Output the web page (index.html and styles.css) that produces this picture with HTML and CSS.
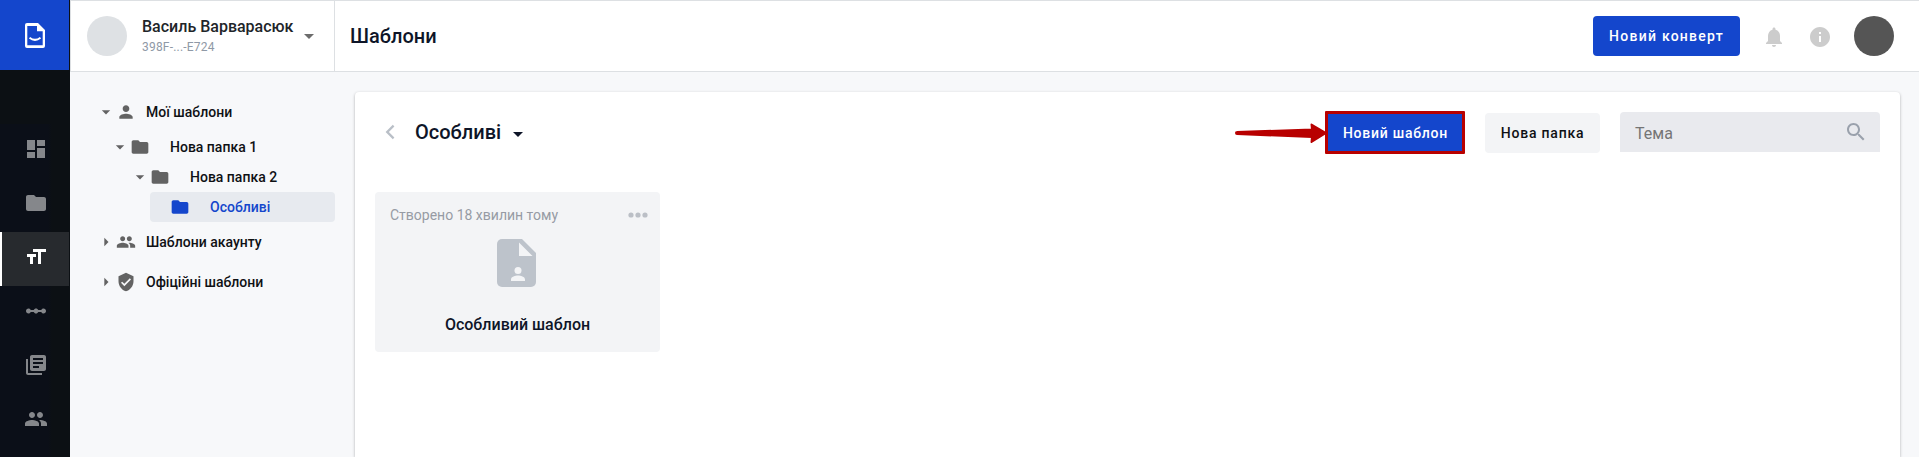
FILE: index.html
```html
<!DOCTYPE html>
<html lang="uk">
<head>
<meta charset="utf-8">
<title>Шаблони</title>
<link rel="stylesheet" href="styles.css">
</head>
<body>
<svg class="defs" width="0" height="0">
  <symbol id="folder" viewBox="0 0 24 24"><path d="M10 4H4c-1.1 0-2 .9-2 2v12c0 1.100.9 2 2 2h16c1.100 0 2-.9 2-2V8c0-1.100-.9-2-2-2h-8z"/></symbol>
  <symbol id="people" viewBox="0 0 24 24"><path d="M16 11c1.660 0 2.990-1.340 2.990-3S17.660 5 16 5s-3 1.340-3 3 1.340 3 3 3zm-8 0c1.660 0 2.990-1.340 2.990-3S9.660 5 8 5 5 6.340 5 8s1.340 3 3 3zm0 2c-2.330 0-7 1.170-7 3.500V19h14v-2.500c0-2.330-4.670-3.500-7-3.500zm8 0c-.29 0-.62.02-.97.05 1.160.84 1.970 1.970 1.970 3.450V19h6v-2.500c0-2.330-4.670-3.500-7-3.500z"/></symbol>
  <symbol id="down" viewBox="0 0 24 24"><path d="M7 10l5 5 5-5z"/></symbol>
  <symbol id="right" viewBox="0 0 24 24"><path d="M10 17l5-5-5-5z"/></symbol>
</svg>
<div class="app">
  <nav class="rail">
    <a class="logo"><svg width="20" height="25" viewBox="0 0 20 25"><path fill="#fff" fill-rule="evenodd" d="M2 0h11l7 7v16a2 2 0 0 1-2 2H2a2 2 0 0 1-2-2V2a2 2 0 0 1 2-2zm.3 3v19.200h15.400V8.300H12V3z"/><path d="M4.500 14.800q5.500 4.200 11 0" fill="none" stroke="#fff" stroke-width="2"/></svg></a>
    <a class="rail-item"><svg class="icon" viewBox="0 0 24 24"><path d="M3 13h8V3H3v10zm0 8h8v-6H3v6zm10 0h8V11h-8v10zm0-18v6h8V3h-8z"/></svg></a>
    <a class="rail-item"><svg class="icon"><use href="#folder"/></svg></a>
    <a class="rail-item active"><svg class="icon" viewBox="0 0 24 24"><path d="M9 4v3h5v12h3V7h5V4H9zm-6 8h3v7h3v-7h3V9H3v3z"/></svg></a>
    <a class="rail-item"><svg class="icon" viewBox="0 0 24 24"><path d="M19.500 9.500c-1.030 0-1.900.62-2.290 1.500h-2.920c-.39-.88-1.260-1.500-2.290-1.500s-1.900.62-2.290 1.500H6.790c-.39-.88-1.260-1.500-2.290-1.500C3.120 9.500 2 10.620 2 12s1.120 2.500 2.500 2.500c1.030 0 1.900-.62 2.290-1.500h2.920c.39.880 1.260 1.500 2.290 1.500s1.900-.62 2.290-1.500h2.920c.39.880 1.260 1.500 2.290 1.500 1.380 0 2.500-1.120 2.500-2.500s-1.120-2.500-2.500-2.500z"/></svg></a>
    <a class="rail-item"><svg class="icon" viewBox="0 0 24 24"><path d="M4 6H2v14c0 1.100.9 2 2 2h14v-2H4V6zm16-4H8c-1.100 0-2 .9-2 2v12c0 1.100.9 2 2 2h12c1.100 0 2-.9 2-2V4c0-1.100-.9-2-2-2zm-1 9H9V9h10v2zm-4 4H9v-2h6v2zm4-8H9V5h10v2z"/></svg></a>
    <a class="rail-item"><svg class="icon"><use href="#people"/></svg></a>
  </nav>
  <div class="main">
    <header class="topbar">
      <div class="account">
        <span class="account-avatar"></span>
        <div class="account-text"><div class="account-name">Василь Варварасюк</div><div class="account-id">398F-...-E724</div></div>
        <svg class="icon account-caret"><use href="#down"/></svg>
      </div>
      <h1 class="page-title">Шаблони</h1>
      <div class="topbar-actions">
        <button class="btn primary envelope">Новий конверт</button>
        <svg class="icon bell" viewBox="0 0 24 24"><path d="M12 22c1.100 0 2-.9 2-2h-4c0 1.100.89 2 2 2zm6-6v-5c0-3.070-1.640-5.640-4.500-6.320V4c0-.83-.67-1.500-1.500-1.500s-1.500.67-1.500 1.500v.68C7.630 5.360 6 7.920 6 11v5l-2 2v1h16v-1l-2-2z"/></svg>
        <svg class="icon info" viewBox="0 0 24 24"><path d="M12 2C6.480 2 2 6.480 2 12s4.480 10 10 10 10-4.480 10-10S17.520 2 12 2zm1 15h-2v-6h2v6zm0-8h-2V7h2v2z"/></svg>
        <span class="user-avatar"></span>
      </div>
    </header>
    <div class="content">
      <aside class="tree">
        <div class="row root"><svg class="small"><use href="#down"/></svg><svg class="small" viewBox="0 0 24 24"><path d="M12 12c2.210 0 4-1.790 4-4s-1.790-4-4-4-4 1.790-4 4 1.790 4 4 4zm0 2c-2.670 0-8 1.340-8 4v2h16v-2c0-2.660-5.330-4-8-4z"/></svg><span class="label">Мої шаблони</span></div>
        <div class="row level-1"><svg class="small"><use href="#down"/></svg><svg class="small"><use href="#folder"/></svg><span class="label">Нова папка 1</span></div>
        <div class="row level-2"><svg class="small"><use href="#down"/></svg><svg class="small"><use href="#folder"/></svg><span class="label">Нова папка 2</span></div>
        <div class="row level-3 selected"><svg class="small"><use href="#folder"/></svg><span class="label">Особливі</span></div>
        <div class="row root"><svg class="small"><use href="#right"/></svg><svg class="small" viewBox="0 0 24 24"><use href="#people"/></svg><span class="label">Шаблони акаунту</span></div>
        <div class="row root"><svg class="small"><use href="#right"/></svg><svg class="small" viewBox="0 0 24 24"><path d="M12 1L3 5v6c0 5.550 3.840 10.740 9 12 5.160-1.260 9-6.450 9-12V5l-9-4zm-2 16l-4-4 1.410-1.410L10 14.170l6.590-6.590L18 9l-8 8z"/></svg><span class="label">Офіційні шаблони</span></div>
      </aside>
      <section class="panel">
        <div class="toolbar">
          <svg class="icon back" viewBox="0 0 24 24"><path d="M15.400 6.400L13.800 4.800 6.600 12l7.200 7.200 1.600-1.600L9.900 12z"/></svg>
          <h2 class="folder-title">Особливі</h2>
          <svg class="icon title-caret"><use href="#down"/></svg>
          <svg class="pointer" width="94" height="22" viewBox="0 0 94 22"><path fill="#b80000" stroke="#b80000" stroke-linejoin="round" stroke-width="2" d="M3 10L78 7.500 77.500 2.500 92 11 77.500 20 78 15 3 12a1 1 0 0 1 0-2z"/></svg>
          <button class="btn primary highlighted">Новий шаблон</button>
          <button class="btn light">Нова папка</button>
          <div class="search"><span>Тема</span><svg class="icon" viewBox="0 0 24 24"><path d="M15.500 14h-.79l-.28-.27C15.410 12.590 16 11.110 16 9.500 16 5.910 13.090 3 9.500 3S3 5.910 3 9.500 5.910 16 9.500 16c1.610 0 3.090-.59 4.230-1.570l.27.28v.79l5 4.990L20.490 19l-4.990-5zm-6 0C7.010 14 5 11.990 5 9.500S7.010 5 9.500 5 14 7.010 14 9.500 11.990 14 9.500 14z"/></svg></div>
        </div>
        <article class="card">
          <div class="card-head"><span>Створено 18 хвилин тому</span><svg width="20" height="6" viewBox="0 0 20 6"><circle cx="3" cy="3" r="2.600"/><circle cx="10" cy="3" r="2.600"/><circle cx="17" cy="3" r="2.600"/></svg></div>
          <svg class="doc" width="39" height="48" viewBox="0 0 39 48"><path fill="#bdc3cb" d="M5 0h20l14 14v29a5 5 0 0 1-5 5H5a5 5 0 0 1-5-5V5a5 5 0 0 1 5-5z"/><path fill="#f3f4f6" d="M22 3.500V17h13.500zM14 42v-1.500c0-3 4.500-4 7-4s7 1 7 4V42z"/><circle cx="21" cy="31.500" r="3.500" fill="#f3f4f6"/></svg>
          <div class="card-title">Особливий шаблон</div>
        </article>
      </section>
    </div>
  </div>
</div>
</body>
</html>
```
FILE: styles.css
```css
* { box-sizing: border-box; }
body { margin: 0; overflow: hidden; font-family: Roboto, "Noto Sans", sans-serif; color: #0f1724; background: #f7f8fa; }
svg { flex: none; display: block; fill: currentColor; }
.defs { position: absolute; }
h1, h2 { margin: 0; font-size: 20px; line-height: 28px; font-weight: 500; color: #0e1528; }
.icon { width: 24px; height: 24px; }
.small { width: 20px; height: 20px; }

.app { display: flex; height: 457px; }
.rail { width: 70px; flex: none; background: linear-gradient(90deg, #0b0f18 0, #0b0f18 48px, #0c1014 52px); color: #85878b; border-right: 1px solid #0c1014; }
.logo { display: flex; height: 70px; margin-bottom: 54px; padding: 23px 0 0 25px; background: #1446cc; box-shadow: 0 54px 0 #0c1014; }
.rail-item { display: flex; height: 54px; padding: 13px 0 0 23.500px; }
.rail-item.active { background: #272a2e; color: #fff; border-left: 2px solid #fff; padding-left: 21.500px; }

.main { flex: 1; min-width: 0; display: flex; flex-direction: column; }
.topbar { display: flex; align-items: center; height: 72px; flex: none; background: #fff; border: 1px solid #dde0e3; border-right: 0; }
.account { display: flex; align-items: center; width: 264px; height: 70px; padding-left: 16px; border-right: 1px solid #dde0e3; }
.account-avatar { width: 40px; height: 40px; border-radius: 50%; background: #dee1e4; flex: none; }
.account-text { margin: 2px 0 0 15px; width: 155px; white-space: nowrap; }
.account-name { font-size: 16px; line-height: 20px; font-weight: 500; color: #212529; }
.account-id { font-size: 12px; line-height: 20px; color: #8f99a6; letter-spacing: .2px; }
.account-caret { color: #6c6c6c; }
.page-title { margin-left: 15px; }
.topbar-actions { margin-left: auto; display: flex; align-items: center; padding-right: 25px; color: #ccc; }
.bell { margin: 1px 0 0 22px; }
.info { margin: 2px 0 0 22px; }
.user-avatar { width: 40px; height: 40px; margin-left: 22px; border-radius: 50%; background: #555; }

.btn { height: 40px; padding: 0; border: 0; border-radius: 4px; font: 500 14px Roboto, "Noto Sans", sans-serif; letter-spacing: 1.250px; text-align: center; flex: none; }
.primary { background: #1446cc; color: #fff; }
.envelope { width: 147px; }
.light { width: 115px; margin: 2px 20px 0; background: #f3f4f6; color: #0f1114; letter-spacing: .8px; }
.highlighted { width: 140px; height: 43px; padding: 2px 0 0 1px; border: 3px solid #b80000; border-radius: 1px; letter-spacing: .75px; }

.content { flex: 1; display: flex; padding: 20px 19px 0 0; }
.tree { width: 285px; padding-right: 20px; flex: none; color: #636363; }
.row { display: flex; align-items: center; height: 30px; font-size: 14px; font-weight: 500; }
.label { color: #0f1114; margin-left: 20px; }
.root { height: 40px; padding-left: 26px; }
.root .label { margin-left: 10px; }
.level-1 { padding-left: 40px; }
.level-2 { padding-left: 60px; }
.level-3 { margin-left: 80px; padding-left: 20px; }
.selected { background: #e7eaef; border-radius: 4px; color: #1446cc; }
.selected .label { color: #1446cc; }

.panel { flex: 1; min-width: 0; padding: 0 20px; background: #fff; border-radius: 4px 4px 0 0; box-shadow: 0 1px 3px rgba(0, 0, 0, .3); }
.toolbar { display: flex; align-items: center; height: 80px; }
.back { margin-left: 4px; color: #b9bfc7; }
.folder-title { margin-left: 12px; }
.title-caret { margin: 3px 0 0 5px; color: #0e1528; }
.pointer { margin: 2px -3px 0 auto; }
.search { display: flex; align-items: center; justify-content: space-between; width: 260px; height: 40px; padding: 0 12px 0 15px; border-radius: 4px 4px 0 0; background: #e9eaee; color: #757575; font-size: 16px; }
.search span { padding-top: 2px; }
.search .icon { color: #9aa1ac; }
.card { width: 285px; height: 160px; margin-top: 20px; padding: 14px 12px 0 15px; border-radius: 4px; background: #f3f4f6; }
.card-head { display: flex; align-items: center; justify-content: space-between; height: 18px; font-size: 14px; color: #969ba4; }
.card-head svg { color: #bbbfc6; }
.doc { margin: 15px auto 0 107px; }
.card-title { margin: 26px 3px 0 0; text-align: center; font-size: 16px; line-height: 24px; font-weight: 500; color: #0e1528; }
```
